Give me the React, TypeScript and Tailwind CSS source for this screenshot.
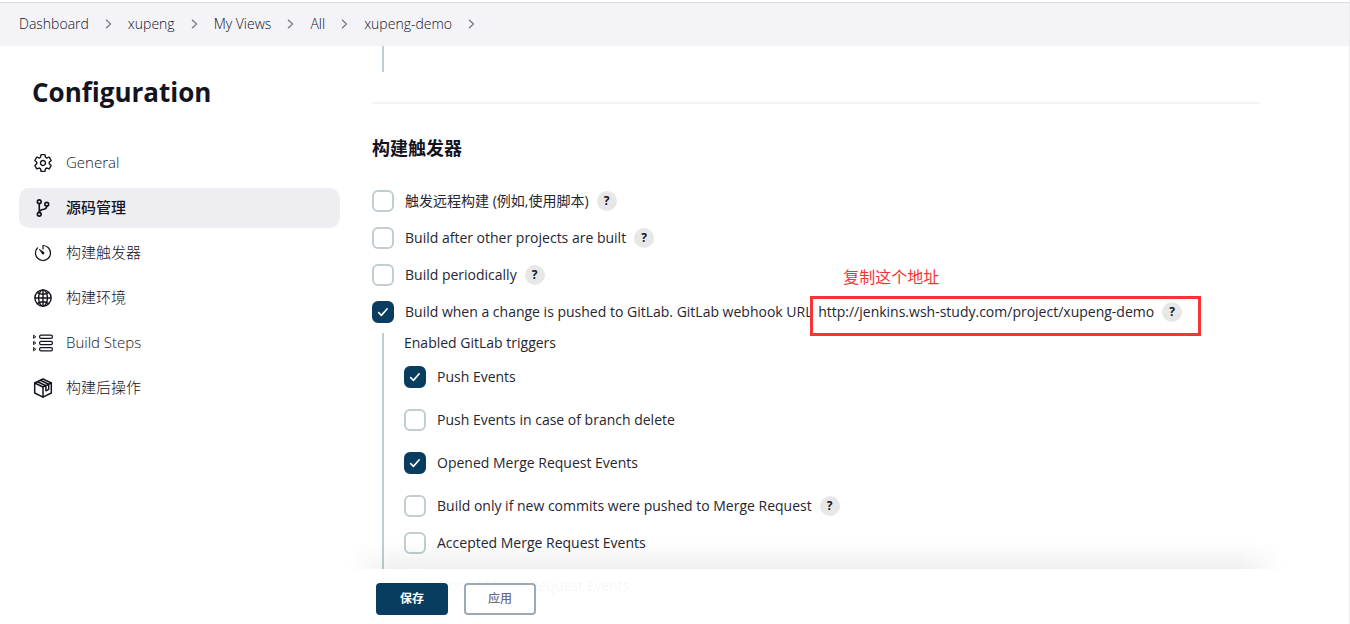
import { useId, type ReactNode } from 'react';
import { IoSettingsOutline, IoGitBranchOutline, IoTimerOutline, IoGlobeOutline } from 'react-icons/io5';

const crumbs = ['Dashboard', 'xupeng', 'My Views', 'All', 'xupeng-demo'];

function StepsIcon() {
  return (
    <svg viewBox="0 0 20 20" className="size-5" fill="none" stroke="currentColor" strokeWidth="1.2" strokeLinejoin="round">
      {[2.2, 8.4, 14.6].map((y) => (
        <g key={y}>
          <path d={`M.6 ${y}v3.2L2.8 ${y + 1.6}z`} strokeWidth="1" />
          <rect x="6.6" y={y} width="12.8" height="3.2" rx="1.4" />
        </g>
      ))}
    </svg>
  );
}

function PackageIcon() {
  return (
    <svg viewBox="0 0 20 20" className="size-5" fill="none" stroke="currentColor" strokeWidth="1.5" strokeLinejoin="round" strokeLinecap="round">
      <path d="M10 1l8.3 4v10L10 19.1 1.7 15V5z" />
      <path d="M1.7 5L10 9l8.3-4M10 9v10M4.5 3.7l8.4 4v5.1l2.8-1.5V6.3L7.3 2.3" />
    </svg>
  );
}

const tasks: { label: string; icon: ReactNode; active?: boolean }[] = [
  { label: 'General', icon: <IoSettingsOutline className="size-5 [&_*]:[stroke-width:36px]" /> },
  { label: '源码管理', icon: <IoGitBranchOutline className="size-5 [&_*]:[stroke-width:42px]" />, active: true },
  { label: '构建触发器', icon: <IoTimerOutline className="size-5" /> },
  { label: '构建环境', icon: <IoGlobeOutline className="size-5 [&_*]:[stroke-width:36px]" /> },
  { label: 'Build Steps', icon: <StepsIcon /> },
  { label: '构建后操作', icon: <PackageIcon /> },
];

function HelpButton() {
  return (
    <button type="button" aria-label="Help" className="flex size-5 shrink-0 items-center justify-center rounded-full bg-[#e7e7e8] text-xs font-bold text-[#14141f]">
      ?
    </button>
  );
}

function Option({ label, checked, help, children }: { label: string; checked?: boolean; help?: boolean; children?: ReactNode }) {
  const id = useId();
  return (
    <div className="flex h-[22px] items-center whitespace-nowrap">
      <span className="mr-[11px] grid size-[22px] shrink-0 place-items-center">
        <input
          id={id}
          type="checkbox"
          defaultChecked={checked}
          className="peer col-start-1 row-start-1 size-[22px] appearance-none rounded-md border-2 border-[#c1cdd2] bg-white checked:border-[#083d60] checked:bg-[#083d60]"
        />
        <svg viewBox="0 0 22 22" className="pointer-events-none invisible col-start-1 row-start-1 size-[22px] peer-checked:visible" fill="none" stroke="white" strokeWidth="1.6" strokeLinecap="round" strokeLinejoin="round">
          <path d="M6.7 11.6l2.7 2.8 5.8-6.6" />
        </svg>
      </span>
      <label htmlFor={id}>{label}</label>
      {children}
      {help && <span className="ml-2"><HelpButton /></span>}
    </div>
  );
}

export default function App() {
  return (
    <div className="flex h-screen flex-col overflow-hidden border-r border-[#ececee] bg-white font-['Open_Sans','Noto_Sans_CJK_SC',sans-serif] text-sm text-[#14141f]">
      <nav aria-label="Breadcrumb" className="mt-0.5 h-11 shrink-0 border-t border-[#d9d9df] bg-[#f3f3f8] px-[19px] font-light">
        <ol className="flex h-[42px] items-center gap-4">
          {crumbs.map((c) => (
            <li key={c} className="flex items-center gap-4">
              <a href="#">{c}</a>
              <svg viewBox="0 0 7 10" className="h-2.5 w-[7px]" fill="none" stroke="#77777f" strokeWidth="1.2">
                <path d="M1 .8L5.5 5 1 9.2" />
              </svg>
            </li>
          ))}
        </ol>
      </nav>

      <div className="flex min-h-0 flex-1">
        <aside className="w-[372px] shrink-0 pr-8 pl-[19px]">
          <h1 className="mt-7 px-[13px] text-[26px] leading-9 font-bold">Configuration</h1>
          <nav className="mt-[33px] flex flex-col gap-[5px]">
            {tasks.map((t) => (
              <a
                key={t.label}
                href="#"
                className={`flex h-10 items-center gap-[13px] rounded-[10px] px-3.5 text-[15px] ${t.active ? 'bg-[#eeedf2] font-medium' : 'font-light'}`}
              >
                {t.icon}
                <span>{t.label}</span>
              </a>
            ))}
          </nav>
        </aside>

        <main className="relative mr-[89px] min-w-0 flex-1 text-[#262631]">
          <div className="ml-2.5 h-[26px] border-l-2 border-[#c1cdd2]" />
          <hr className="mt-[30px] border-t-2 border-[#f3f3f8]" />
          <h2 className="mt-8 mb-[30px] text-lg leading-6 font-bold text-[#14141f]">构建触发器</h2>
          <div className="flex flex-col gap-[15px]">
            <Option label="触发远程构建 (例如,使用脚本)" help />
            <Option label="Build after other projects are built" help />
            <Option label="Build periodically" help />
            <Option label="Build when a change is pushed to GitLab. GitLab webhook URL:" checked>
              <div className="relative mt-2 -ml-1.5 flex h-10 w-[391px] items-center gap-2 border-3 border-[#fa3434] bg-white pb-2 pl-[5px]">
                <span className="absolute -top-[34px] left-[30px] text-base text-[#fa3434]">复制这个地址</span>
                <span>http://jenkins.wsh-study.com/project/xupeng-demo</span>
                <HelpButton />
              </div>
            </Option>
          </div>
          <div className="mt-2.5 ml-2.5 border-l-2 border-[#c1cdd2] pb-10 pl-5">
            <p className="mb-[13px] leading-5">Enabled GitLab triggers</p>
            <div className="flex flex-col gap-[21px]">
              <Option label="Push Events" checked />
              <Option label="Push Events in case of branch delete" />
              <Option label="Opened Merge Request Events" checked />
              <div className="flex flex-col gap-[15px]">
                <Option label="Build only if new commits were pushed to Merge Request" help />
                <Option label="Accepted Merge Request Events" />
              </div>
              <Option label="Closed Merge Request Events" />
            </div>
          </div>

          <div className="absolute inset-x-0 bottom-0 flex h-[55px] gap-4 bg-white/96 px-1 pt-3.5">
            <div className="pointer-events-none absolute -inset-x-6 bottom-full h-7 bg-linear-to-t from-black/6 to-transparent [mask-image:linear-gradient(to_right,transparent,black_44px,black_calc(100%-44px),transparent)]" />
            <button type="button" className="h-8 w-18 rounded-sm bg-[#083d60] text-xs font-bold text-white">保存</button>
            <button type="button" className="h-8 w-18 rounded-sm border-2 border-[#9baab4] bg-white text-xs font-medium text-[#6b6b85]">应用</button>
          </div>
        </main>
      </div>
    </div>
  );
}
